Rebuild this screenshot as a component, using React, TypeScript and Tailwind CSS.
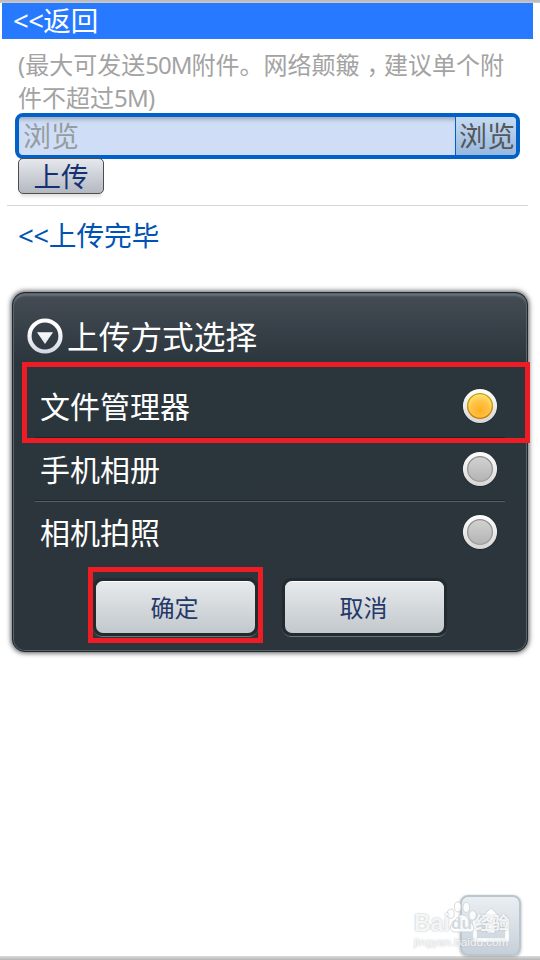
import React from "react";

function Radio({ on = false }: { on?: boolean }) {
  return (
    <svg width="36" height="36" viewBox="0 0 36 36" className="mb-[2px] shrink-0">
      <defs>
        <linearGradient id="ring" x1="0" y1="0" x2="0" y2="1">
          <stop offset="0" stopColor="#ffffff" />
          <stop offset="1" stopColor="#d6d6d6" />
        </linearGradient>
        <linearGradient id="off" x1="0" y1="0" x2="0" y2="1">
          <stop offset="0" stopColor="#d2d2d2" />
          <stop offset="1" stopColor="#b4b4b4" />
        </linearGradient>
        <linearGradient id="offEdge" x1="0" y1="0" x2="0" y2="1">
          <stop offset="0" stopColor="#8e8e8e" />
          <stop offset="1" stopColor="#a0a0a0" />
        </linearGradient>
        <radialGradient id="on" cx="0.5" cy="0.68" r="0.68">
          <stop offset="0" stopColor="#ffaf20" />
          <stop offset="0.55" stopColor="#ffc246" />
          <stop offset="1" stopColor="#ffe680" />
        </radialGradient>
        <linearGradient id="onEdge" x1="0" y1="0" x2="0" y2="1">
          <stop offset="0" stopColor="#c4a800" />
          <stop offset="1" stopColor="#c47a08" />
        </linearGradient>
      </defs>
      <circle cx="18" cy="18.2" r="17.7" fill="#20282d" />
      <circle cx="18" cy="18" r="17.1" fill="url(#ring)" />
      <circle
        cx="18"
        cy="18"
        r="12.4"
        fill={on ? "url(#on)" : "url(#off)"}
        stroke={on ? "url(#onEdge)" : "url(#offEdge)"}
        strokeWidth="1.3"
      />
    </svg>
  );
}

function Row({ label, on }: { label: string; on?: boolean }) {
  return (
    <div className="flex h-[61px] items-center justify-between pr-[7px] pl-[5px]">
      <span className="text-[30px] leading-[61px]">{label}</span>
      <Radio on={on} />
    </div>
  );
}

function Divider() {
  return <div className="h-[2px] border-t border-b border-t-[#1e262b] border-b-[#57605f]" />;
}

function DialogButton({ label }: { label: string }) {
  return (
    <div className="h-[59px] w-[165px] rounded-[9px] border-b border-[#6d7677] bg-[#222b30] px-[3px] pt-[3px]">
      <button className="block h-[52px] w-full rounded-[7px] border-t border-white bg-linear-to-b from-[#e6eaed] to-[#c3c8cc] pr-[2px] text-[24px] leading-[50px] text-[#24386a]">
        {label}
      </button>
    </div>
  );
}

function Watermark() {
  return (
    <div className="absolute top-[900px] left-[414px] h-[50px] w-[105px] font-['Liberation_Sans','Noto_Sans_CJK_SC',sans-serif] text-white/85 [text-shadow:0_0_2px_#a9afb4]">
      <svg width="32" height="32" viewBox="0 0 30 30" className="absolute top-[1px] left-[32px]" fill="#fff" fillOpacity="0.85" stroke="#ccd1d5" strokeWidth="0.8">
        <ellipse cx="4.5" cy="12" rx="3.2" ry="4.4" />
        <ellipse cx="11" cy="5.5" rx="3.2" ry="4.8" />
        <ellipse cx="19" cy="6" rx="3.2" ry="4.8" />
        <ellipse cx="25" cy="13.5" rx="3.4" ry="4.4" />
        <path d="M15 13c-4 0-5 4-9 8s-1 9 4 8h11c5 1 7-4 3-8s-4-8-9-8z" />
      </svg>
      <div className="relative flex items-center pt-[11px] text-[23px] leading-[25px] font-bold">
        <span className="w-[37px]">Bai</span>
        <span className="w-[24px] text-[17px] text-[#d3d9df] [text-shadow:none]">du</span>
        <span className="text-[17px] whitespace-nowrap">经验</span>
      </div>
      <div className="relative text-[11.7px] leading-[12px] whitespace-nowrap">jingyan.baidu.com</div>
    </div>
  );
}

export default function App() {
  return (
    <div className="relative flex h-[960px] w-[540px] flex-col overflow-hidden bg-white font-['Noto_Sans','Noto_Sans_CJK_SC',sans-serif]">
      <div className="h-[3px] shrink-0 bg-linear-to-b from-[#b8b8b8] to-[#cccccc]" />
      <header className="mr-[7px] ml-[2px] h-[36px] shrink-0 bg-[#277aff] pl-[11px] text-[27.5px] leading-[36px] text-white">
        <span className="tracking-[-0.6px]">&lt;&lt;</span>返回
      </header>

      <p className="mt-[9px] ml-[18px] h-[65px] w-[500px] shrink-0 text-[24px] leading-[33px] whitespace-nowrap text-[#a3a3a3]">
        (最大可发送<span className="tracking-[-1px]">50M</span>附件。网络颠簸<span className="inline-block h-[33px] w-[24.5px] pl-[7px] align-top [font-feature-settings:'halt']">，</span>建议单个附
        <br />
        件不超过<span className="tracking-[-0.8px]">5M)</span>
      </p>

      <div className="ml-[15px] flex h-[46px] w-[505px] shrink-0 overflow-hidden rounded-[8px] border-4 border-[#0062c8] bg-[#cfdef6]">
        <div className="w-[436px] pl-[4px] text-[28px] leading-[38px] text-[#969c9f] shadow-[inset_0_5px_5px_-3px_#979fb0]">
          浏览
        </div>
        <button className="w-[61px] border-l border-[#0062c8] bg-linear-to-b from-[#c6dbf2] to-[#98b8de] pl-[2px] text-[28px] leading-[38px] whitespace-nowrap text-[#555759]">
          浏览
        </button>
      </div>

      <button className="-mt-px ml-[18px] h-[36px] w-[86px] shrink-0 rounded-[5px] border border-[#4d4d4d] bg-linear-to-b from-[#e6e8ec] to-[#b4b8c2] text-[27.5px] leading-[35px] text-[#143272] shadow-[0_5px_3px_-2px_#e8e2e2]">
        上传
      </button>

      <div className="mt-[11px] mr-[12px] ml-[7px] h-px shrink-0 bg-[#d6d6d6]" />
      <a className="mt-[9px] ml-[18px] h-[40px] shrink-0 text-[27.7px] leading-[40px] text-[#0053b4]">
        <span className="tracking-[-0.5px]">&lt;&lt;</span>上传完毕
      </a>

      <section className="mt-[37px] ml-[12px] h-[360px] w-[516px] shrink-0 rounded-[13px] border border-[#20292e] bg-[#2b353b] bg-linear-to-b from-[#454c55] via-[#2b353c] via-20% to-[#2b353b] text-white shadow-[inset_0_0_0_1px_#59636a,inset_0_3px_2px_#687078,0_0_5px_1px_#555]">
        <div className="flex h-[83px] items-center pl-[14px]">
          <svg width="36" height="36" viewBox="0 0 36 36" className="mt-[2px] shrink-0">
            <defs>
              <linearGradient id="head" x1="0" y1="0" x2="0" y2="36" gradientUnits="userSpaceOnUse">
                <stop offset="0.3" stopColor="#fff" />
                <stop offset="1" stopColor="#cfd5e0" />
              </linearGradient>
            </defs>
            <circle cx="18" cy="18" r="15.5" fill="none" stroke="url(#head)" strokeWidth="4.2" />
            <path d="M10 14.3h16L18 26z" fill="url(#head)" />
          </svg>
          <h1 className="ml-[4px] pt-[4px] text-[31.7px] leading-[48px]">上传方式选择</h1>
        </div>
        <div className="mx-[22px]">
          <Row label="文件管理器" on />
          <Divider />
          <Row label="手机相册" />
          <Divider />
          <Row label="相机拍照" />
        </div>
        <div className="mt-[15px] ml-[80px] flex gap-[24px]">
          <DialogButton label="确定" />
          <DialogButton label="取消" />
        </div>
      </section>

      <div className="absolute top-[362px] left-[22px] h-[81px] w-[508px] border-[5px] border-[#ee1c24]" />
      <div className="absolute top-[567px] left-[88px] h-[76px] w-[175px] border-[5px] border-[#ee1c24]" />

      <div className="absolute bottom-0 left-0 h-[4px] w-full bg-linear-to-b from-[#dddddd] to-[#b5b5b5]" />
      <div className="absolute top-[895px] left-[460px] flex h-[61px] w-[61px] items-center justify-center rounded-[8px] border-2 border-[#bac6ce] bg-linear-to-b from-[#ebeff3] to-[#c6d0da] shadow-[0_1px_3px_#aaa]">
        <svg width="38" height="36" viewBox="0 0 38 36" fill="none" stroke="#fff" strokeWidth="3.5">
          <path d="M10 14H3v18h32V14h-7" />
          <path d="M19 0L7 12h8v13h8V12h8z" fill="#fff" stroke="#bcc7d1" strokeWidth="0.6" />
        </svg>
      </div>
      <Watermark />
    </div>
  );
}
